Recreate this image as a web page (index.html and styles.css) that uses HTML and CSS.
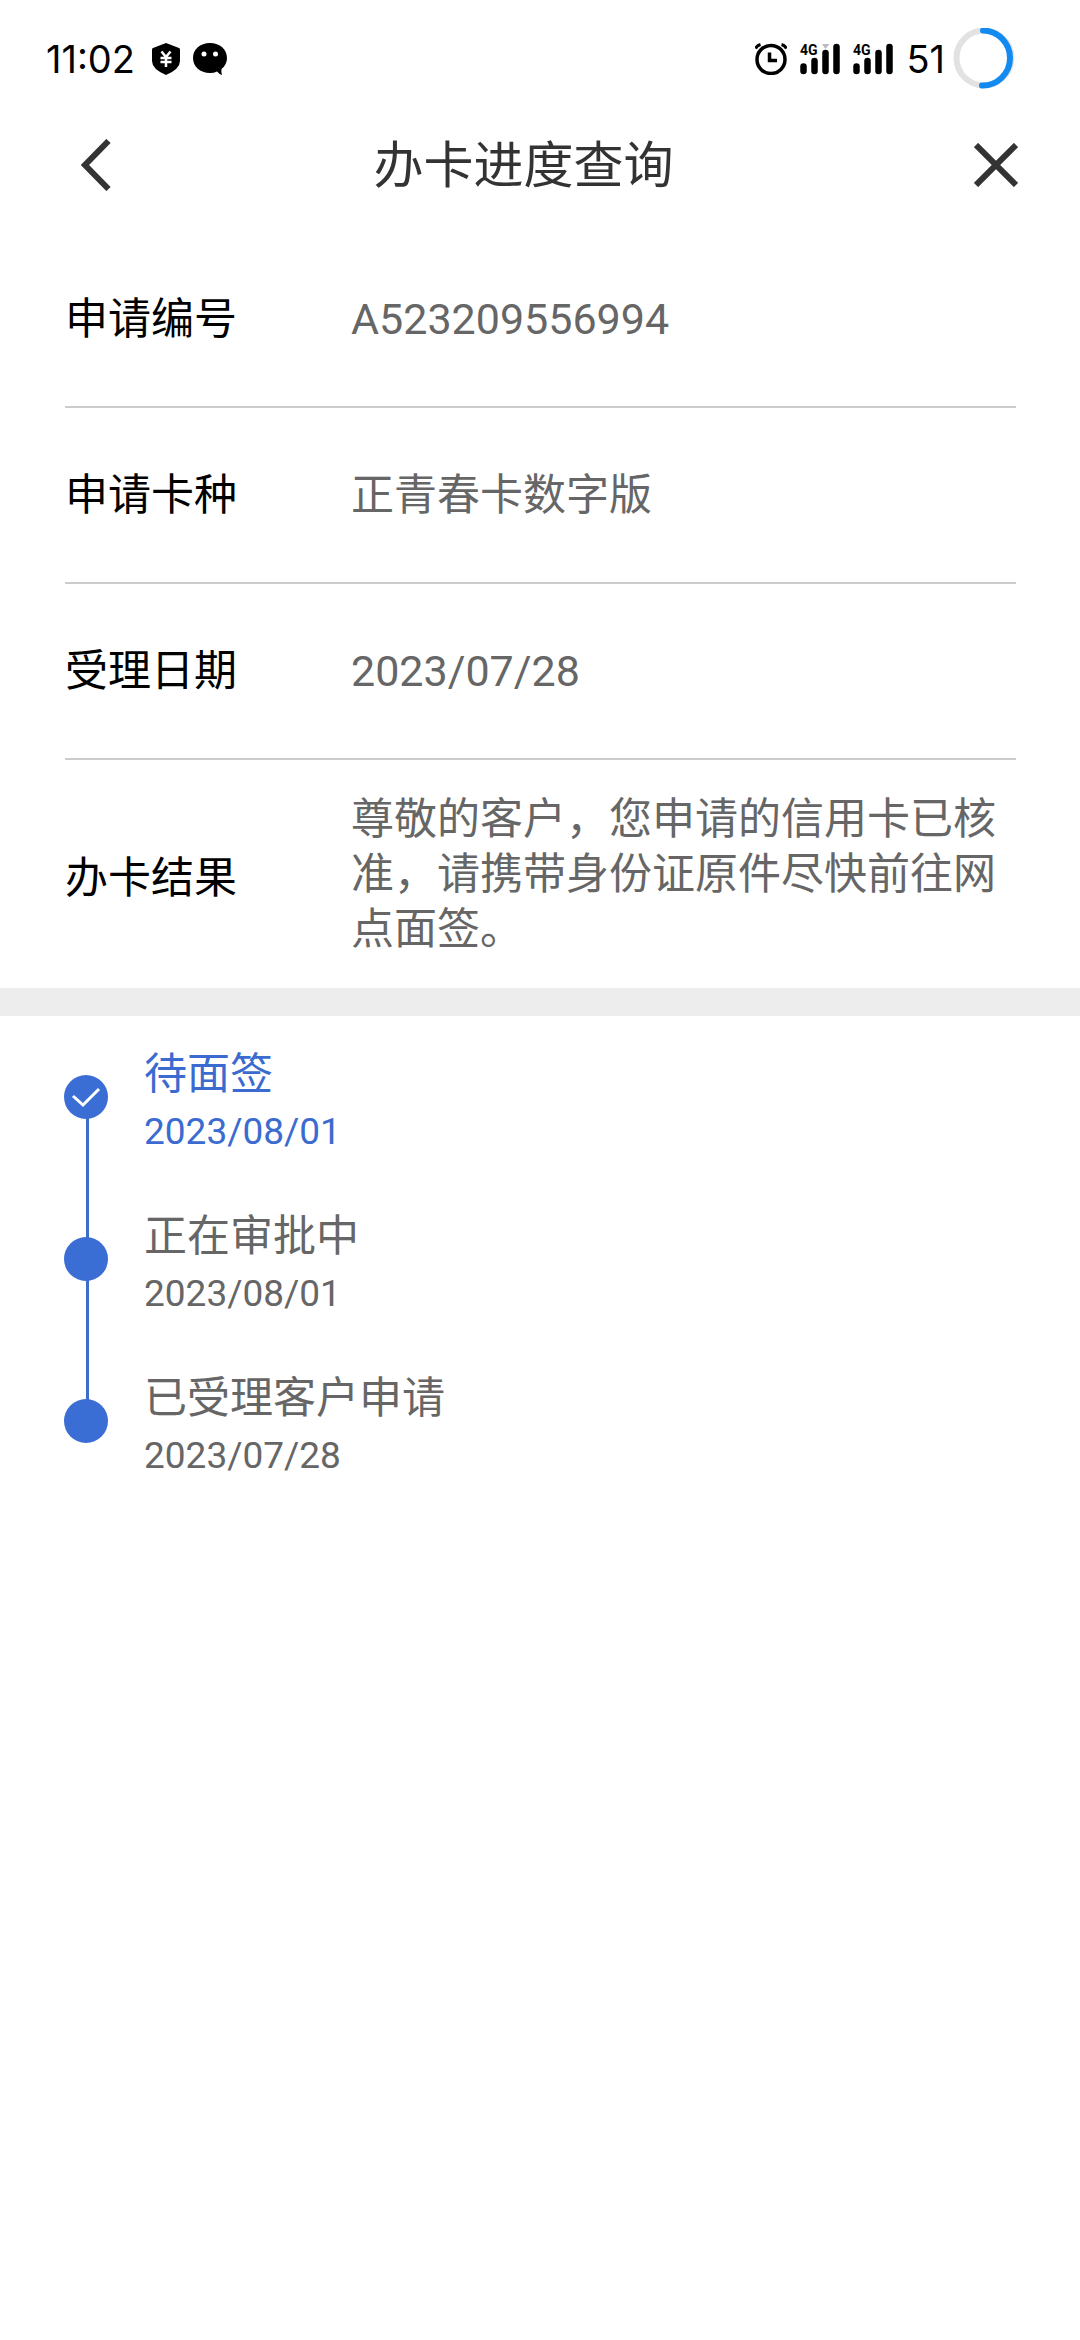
FILE: index.html
```
<!DOCTYPE html>
<html lang="zh-CN">
<head>
    <meta charset="UTF-8">
    <meta name="viewport" content="width=device-width, initial-scale=1.0">
    <title>办卡进度查询</title>
    <link rel="stylesheet" href="styles.css">
</head>
<body>
    <!-- 状态栏 -->
    <div class="status-bar">
        <div class="status-left">
            <span class="time">11:02</span>
            <svg width="28" height="32" viewBox="0 0 28 32">
                <path d="M14 0 L27 5 Q28 5 28 7 V18 Q28 26 14 32 Q0 26 0 18 V7 Q0 5 1 5 Z" fill="#000"/>
                <path d="M9.500 8.500 L14 14 L18.500 8.500 M8.500 15 H19.500 M8.500 19 H19.500 M14 14 V24" fill="none" stroke="#fff" stroke-width="2.500"/>
            </svg>
            <svg width="34" height="32" viewBox="0 0 34 32">
                <path d="M17 0 C7 0 0 6.500 0 15 S7 30 17 30 Q21 30 24 28.500 Q26 31 29 32 Q28 29 28.500 26 Q34 21.500 34 15 C34 6.500 27 0 17 0 Z" fill="#000"/>
                <circle cx="11" cy="11" r="2.500" fill="#fff"/>
                <circle cx="22.500" cy="11" r="2.500" fill="#fff"/>
            </svg>
        </div>
        <div class="status-right">
            <svg width="32" height="32" viewBox="0 0 32 32" fill="none" stroke="#000">
                <circle cx="16" cy="16.500" r="14" stroke-width="3.500"/>
                <path d="M14.500 9.500 V17.500 H22" stroke-width="3.500"/>
                <path d="M0.500 5.500 Q2 2.500 5.500 1.500 M31.500 5.500 Q30 2.500 26.500 1.500" stroke-width="3"/>
            </svg>
            <svg class="signal" width="40" height="40" viewBox="0 -4 40 40">
                <path d="M3.500 23.500 V28 M14.500 18 V28 M25.500 10 V28 M36.500 4 V28" stroke="#000" stroke-width="6.500" stroke-linecap="round"/>
                <path d="M22 1 H29.500 L25.500 6 Z" fill="#bbb"/>
                <text x="0" y="12">4G</text>
            </svg>
            <svg class="signal" width="40" height="40" viewBox="0 -4 40 40">
                <path d="M3.500 23.500 V28 M14.500 18 V28 M25.500 10 V28 M36.500 4 V28" stroke="#000" stroke-width="6.500" stroke-linecap="round"/>
                <text x="0" y="12">4G</text>
            </svg>
            <div class="battery">
                <span>51</span>
                <svg width="62" height="62" viewBox="0 0 62 62" fill="none" stroke-width="6">
                    <circle cx="31" cy="30" r="27.500" stroke="#e2e2e2"/>
                    <path d="M30 2.500 A27.500 27.500 0 1 1 29 57.500" stroke="#128af0" stroke-linecap="round"/>
                </svg>
            </div>
        </div>
    </div>

    <!-- 标题栏 -->
    <header class="nav-bar">
        <button type="button" class="nav-button" aria-label="返回">
            <svg width="30" height="52" viewBox="0 0 30 52">
                <path d="M27.500 2 L4 26 L27.500 50" fill="none" stroke="#333" stroke-width="6"/>
            </svg>
        </button>
        <h1>办卡进度查询</h1>
        <button type="button" class="nav-button" aria-label="关闭">
            <svg width="44" height="44" viewBox="0 0 44 44">
                <path d="M2 2 L42 42 M42 2 L2 42" fill="none" stroke="#333" stroke-width="6"/>
            </svg>
        </button>
    </header>

    <!-- 申请信息 -->
    <dl class="info">
        <div class="info-row">
            <dt>申请编号</dt>
            <dd>A523209556994</dd>
        </div>
        <div class="info-row">
            <dt>申请卡种</dt>
            <dd>正青春卡数字版</dd>
        </div>
        <div class="info-row">
            <dt>受理日期</dt>
            <dd>2023/07/28</dd>
        </div>
        <div class="info-row result">
            <dt>办卡结果</dt>
            <dd>尊敬的客户，您申请的信用卡已核准，请携带身份证原件尽快前往网点面签。</dd>
        </div>
    </dl>

    <!-- 办卡进度 -->
    <ol class="steps">
        <li class="step active">
            <div class="marker">
                <span class="dot">
                    <svg width="30" height="22" viewBox="0 0 30 22">
                        <path d="M2 10 L12 19 L28 3" fill="none" stroke="#fff" stroke-width="3"/>
                    </svg>
                </span>
            </div>
            <div class="step-text">
                <p class="step-name">待面签</p>
                <p class="step-date">2023/08/01</p>
            </div>
        </li>
        <li class="step">
            <div class="marker"><span class="dot"></span></div>
            <div class="step-text">
                <p class="step-name">正在审批中</p>
                <p class="step-date">2023/08/01</p>
            </div>
        </li>
        <li class="step">
            <div class="marker"><span class="dot"></span></div>
            <div class="step-text">
                <p class="step-name">已受理客户申请</p>
                <p class="step-date">2023/07/28</p>
            </div>
        </li>
    </ol>
</body>
</html>
```
FILE: styles.css
```
* {
    box-sizing: border-box;
}
body {
    margin: 0;
    min-height: 100vh;
    background-color: #fff;
    color: #666;
    font-family: Roboto, "Noto Sans CJK SC", sans-serif;
    font-size: 43px;
    line-height: 55px;
}
svg {
    display: block;
    flex-shrink: 0;
}
h1, dl, dd, ol, p {
    margin: 0;
    padding: 0;
}

/* 状态栏 */
.status-bar {
    display: flex;
    justify-content: space-between;
    align-items: center;
    height: 118px;
    padding: 0 65px 0 46px;
    color: #000;
    font-family: Inter, sans-serif;
    font-size: 38px;
}
.status-left, .status-right {
    display: flex;
    align-items: center;
    gap: 13px;
}
.time {
    margin-right: 4px;
}
.signal text {
    font-family: Roboto, sans-serif;
    font-size: 14px;
    font-weight: 700;
}
.battery {
    display: flex;
    align-items: center;
    gap: 8px;
}

/* 标题栏 */
.nav-bar {
    display: flex;
    align-items: center;
    height: 94px;
    padding: 0 62px 0 81px;
}
.nav-bar h1 {
    flex: 1;
    padding: 2px 38px 0 0;
    color: #333;
    font-size: 50px;
    font-weight: 400;
    text-align: center;
}
.nav-button {
    padding: 0;
    border: none;
    background: none;
    cursor: pointer;
}

/* 申请信息 */
.info {
    padding: 20px 64px 0 65px;
    border-bottom: 28px solid #ededed;
}
.info-row {
    display: flex;
    align-items: center;
    min-height: 176px;
    padding: 32px 0 31px;
    border-bottom: 2px solid #ccc;
}
.info-row dt {
    width: 286px;
    flex-shrink: 0;
    color: #000;
}
.info-row dd {
    flex: 1;
}
.info-row.result {
    border-bottom: none;
}
.result dt {
    padding-top: 8px;
}

/* 办卡进度 */
.steps {
    padding: 28px 64px;
    list-style: none;
}
.step {
    display: flex;
    gap: 36px;
    min-height: 162px;
}
.marker {
    position: relative;
    width: 44px;
    padding-top: 31px;
}
.step:not(:last-child) .marker::after {
    content: "";
    position: absolute;
    top: 52px;
    left: 22px;
    width: 3px;
    height: 100%;
    background-color: #3e6dc8;
}
.dot {
    position: relative;
    z-index: 1;
    display: flex;
    justify-content: center;
    align-items: center;
    width: 44px;
    height: 44px;
    border-radius: 50%;
    background-color: #3b6ed5;
}
.step-name {
    line-height: 60px;
}
.step-date {
    font-size: 37px;
}
.active .step-text {
    color: #3b6bd0;
}
```
